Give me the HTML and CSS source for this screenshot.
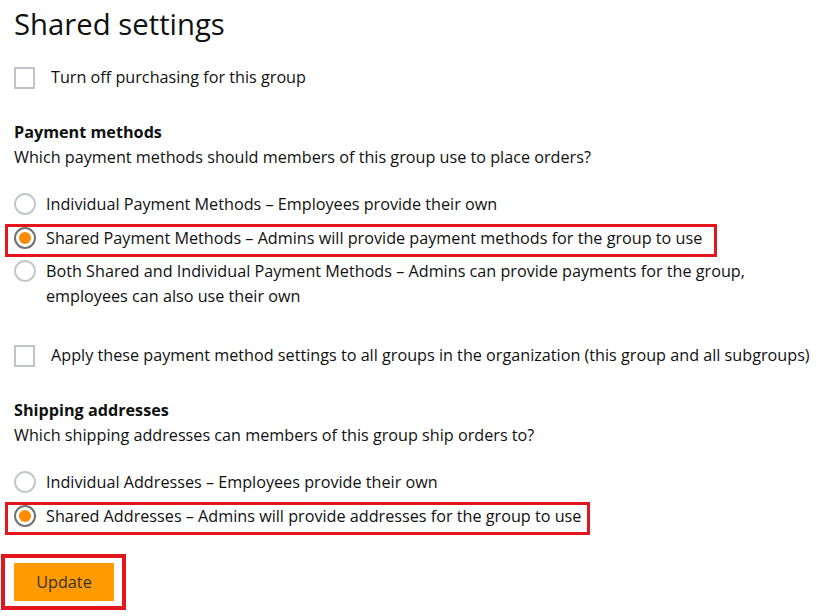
FILE: index.html
```html
<!DOCTYPE html>
<html lang="en">
<head>
    <meta charset="UTF-8">
    <title>Shared settings</title>
    <link rel="stylesheet" href="styles.css">
</head>
<body>
    <div class="page">
        <h1>Shared settings</h1>

        <label class="check-row first">
            <span class="checkbox"></span>
            <span>Turn off purchasing for this group</span>
        </label>

        <section class="group">
            <h2>Payment methods</h2>
            <p class="hint">Which payment methods should members of this group use to place orders?</p>
            <div class="options">
                <label class="radio-row">
                    <span class="radio"></span>
                    <span>Individual Payment Methods – Employees provide their own</span>
                </label>
                <label class="radio-row marked wide">
                    <span class="radio checked"></span>
                    <span>Shared Payment Methods – Admins will provide payment methods for the group to use</span>
                </label>
                <label class="radio-row tight">
                    <span class="radio"></span>
                    <span>Both Shared and Individual Payment Methods – Admins can provide payments for the group,<br>employees can also use their own</span>
                </label>
            </div>
        </section>

        <label class="check-row">
            <span class="checkbox"></span>
            <span>Apply these payment method settings to all groups in the organization (this group and all subgroups)</span>
        </label>

        <section class="group">
            <h2>Shipping addresses</h2>
            <p class="hint">Which shipping addresses can members of this group ship orders to?</p>
            <div class="options">
                <label class="radio-row">
                    <span class="radio"></span>
                    <span>Individual Addresses – Employees provide their own</span>
                </label>
                <label class="radio-row marked">
                    <span class="radio checked"></span>
                    <span>Shared Addresses – Admins will provide addresses for the group to use</span>
                </label>
            </div>
        </section>

        <div class="actions">
            <button class="update-btn">Update</button>
        </div>
    </div>
</body>
</html>
```

FILE: styles.css
```css
body {
    margin: 0;
    font-family: 'Open Sans', 'Liberation Sans', Arial, sans-serif;
    font-size: 16.2px;
    line-height: 25px;
    color: #0f1111;
    background: #fff;
}

.page {
    padding: 0 14px 20px;
}

h1 {
    margin: 0;
    height: 48px;
    font-size: 29.3px;
    line-height: 48px;
    font-weight: 400;
    color: #0f1111;
}

.check-row {
    display: flex;
    align-items: center;
    gap: 16px;
    margin-top: 34px;
    white-space: nowrap;
}

.check-row.first {
    margin-top: 17px;
}

.checkbox {
    box-sizing: border-box;
    width: 21px;
    height: 22px;
    border: 2px solid #c1c4c7;
    flex-shrink: 0;
}

.group {
    margin-top: 29px;
}

.check-row + .group {
    margin-top: 30px;
}

h2 {
    margin: 0;
    font-size: 16.2px;
    line-height: 25px;
    font-weight: 700;
}

.hint {
    margin: 0;
}

.options {
    display: flex;
    flex-direction: column;
    align-items: flex-start;
    gap: 9px;
    margin-top: 22px;
}

.radio-row {
    display: flex;
    align-items: flex-start;
    gap: 10px;
    position: relative;
    white-space: nowrap;
}

.radio-row.tight {
    margin-top: -1px;
}

.radio {
    box-sizing: border-box;
    width: 22px;
    height: 22px;
    margin-top: 1px;
    border: 2px solid #c5c8cb;
    border-radius: 50%;
    flex-shrink: 0;
    display: flex;
    align-items: center;
    justify-content: center;
}

.radio.checked {
    border-color: #6f7373;
}

.radio.checked::before {
    content: '';
    width: 12px;
    height: 12px;
    border-radius: 50%;
    background: #ff8a00;
}

/* red annotation frames */
.marked::after {
    content: '';
    position: absolute;
    left: -9px;
    right: -9px;
    top: -2px;
    bottom: -6px;
    border: 3px solid #e3161d;
    pointer-events: none;
}

.marked.wide::after {
    right: -15px;
}

.actions {
    margin-top: 34px;
}

.update-btn {
    position: relative;
    width: 100px;
    height: 38px;
    border: none;
    padding: 0;
    background: #ff9a00;
    color: #333;
    font-family: inherit;
    font-size: 16.2px;
}

.update-btn::after {
    content: '';
    position: absolute;
    left: -13px;
    right: -12px;
    top: -9px;
    bottom: -9px;
    border: 4px solid #e3161d;
}
```
